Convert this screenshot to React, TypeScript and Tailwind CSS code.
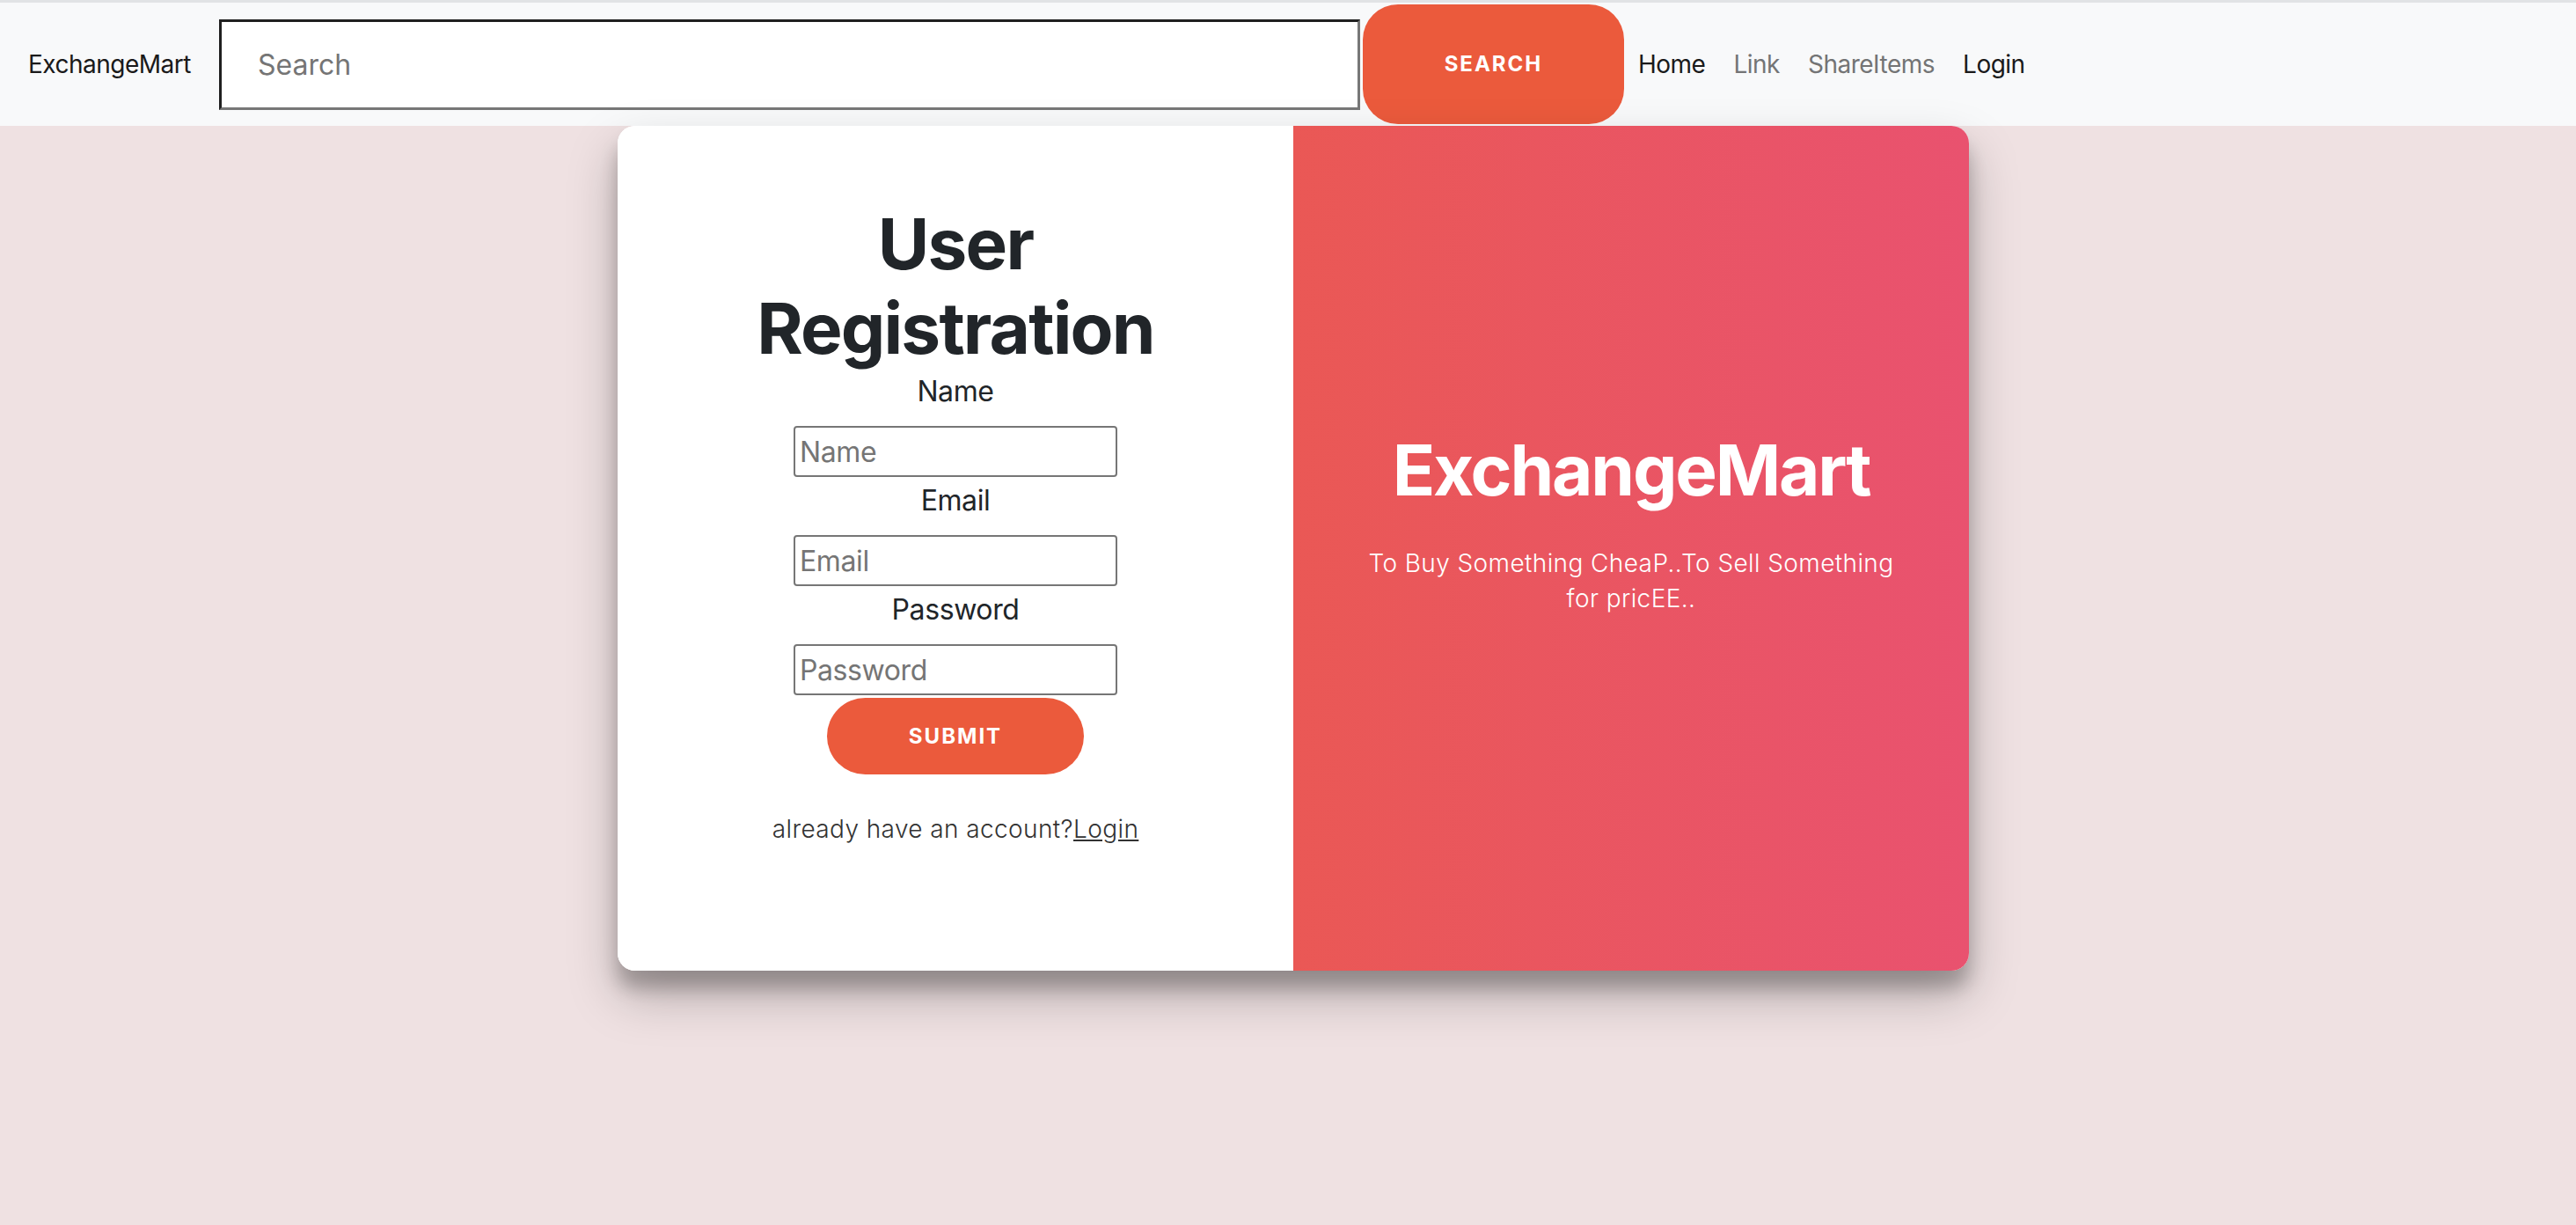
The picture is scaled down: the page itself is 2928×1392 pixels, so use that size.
import React from "react";

const NavBar = () => {
  return (
    <nav className="flex h-[143px] items-center border-t-[3px] border-[#e1e3e5] bg-[#f8f9fa] pl-[32px]">
      <a className="mr-[32px] text-[28px] tracking-[-0.5px] text-[#1a1a1a]">ExchangeMart</a>
      <input
        type="text"
        placeholder="Search"
        className="h-[103px] w-[1297px] border-[3px] border-t-[#1f1f1f] border-l-[#1f1f1f] border-b-[#777777] border-r-[#777777] bg-white pl-[41px] text-[32px] outline-none placeholder:text-[#757575]"
      />
      <button className="ml-[3px] h-[136px] w-[297px] rounded-[40px] bg-[#eb5a3c] text-[24px] font-bold uppercase tracking-[2px] text-white">
        Search
      </button>
      <ul className="flex text-[28px] tracking-[-0.5px]">
        <li className="px-[16px] text-[#1a1a1a]">Home</li>
        <li className="px-[16px] text-[#737475]">Link</li>
        <li className="px-[16px] text-[#737475]">ShareItems</li>
        <li className="px-[16px] text-[#1a1a1a]">Login</li>
      </ul>
    </nav>
  );
};

const Field = ({ label, type }: { label: string; type: string }) => (
  <>
    <label className="mb-[15px] text-[32px] leading-[48px] tracking-[-0.4px] text-[#212529]">
      {label}
    </label>
    <input
      type={type}
      placeholder={label}
      className="mb-[3px] h-[58px] w-[368px] rounded-[4px] border-2 border-[#767676] bg-white pl-[5px] text-[32px] tracking-[-0.4px] outline-none placeholder:text-[#757575]"
    />
  </>
);

const RegisterForm = () => {
  return (
    <div className="flex w-1/2 flex-col items-center bg-white pt-[86px]">
      <h1 className="text-center text-[80px] font-bold leading-[96px] tracking-[-1.8px] text-[#212529]">
        User
        <br />
        Registration
      </h1>
      <Field label="Name" type="text" />
      <Field label="Email" type="email" />
      <Field label="Password" type="password" />
      <button className="h-[87px] w-[292px] rounded-full bg-[#eb5a3c] text-[24px] font-bold uppercase tracking-[2px] text-white">
        Submit
      </button>
      <p className="mt-[42px] text-[28px] font-light leading-[40px] tracking-[0.4px] text-[#333333]">
        already have an account?<a className="underline">Login</a>
      </p>
    </div>
  );
};

const App = () => {
  return (
    <div className="min-h-screen bg-[#efe1e2] font-['Inter',sans-serif]">
      <NavBar />
      <div className="flex justify-center pl-[12px]">
        <div className="flex h-[960px] w-[1536px] overflow-hidden rounded-[20px] bg-white shadow-[0_28px_56px_rgba(0,0,0,0.25),0_20px_20px_rgba(0,0,0,0.22)]">
          <RegisterForm />
          <div className="flex w-1/2 flex-col items-center justify-center bg-gradient-to-r from-[#ea5855] to-[#e9526f] px-[80px] text-center text-white">
            <h1 className="text-[80px] font-bold leading-[96px] tracking-[-2.2px]">ExchangeMart</h1>
            <p className="mb-[60px] mt-[38px] text-[28px] font-light leading-[40px] tracking-[0.4px]">
              To Buy Something CheaP..To Sell Something for pricEE..
            </p>
          </div>
        </div>
      </div>
    </div>
  );
};

export default App;
